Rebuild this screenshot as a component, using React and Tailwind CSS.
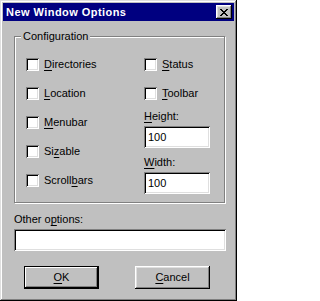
import React from 'react';

const raised = 'shadow-[inset_-1px_-1px_0_#000,inset_1px_1px_0_#fff,inset_-2px_-2px_0_#808080,inset_2px_2px_0_#dfdfdf]';
const sunken = 'shadow-[inset_1px_1px_0_#808080,inset_-1px_-1px_0_#fff,inset_2px_2px_0_#000,inset_-2px_-2px_0_#dfdfdf]';

const Key = ({ children }) => (
    <span className="underline decoration-1 underline-offset-[2px]">{children}</span>
);

const Check = ({ children }) => (
    <label className="flex items-center h-[13px]">
        <span className={`w-[13px] h-[13px] bg-white shrink-0 ${sunken}`} />
        <span className="ml-[5px] leading-[13px]">{children}</span>
    </label>
);

const Field = ({ value, className }) => (
    <div className={`h-[22px] bg-white flex items-center pl-[4px] leading-[13px] ${sunken} ${className}`}>
        {value}
    </div>
);

const App = () => {
    return (
        <div className="w-[237px] h-[301px] bg-[#c0c0c0] p-[3px] text-[11px] text-black font-['Liberation_Sans',Arial,sans-serif] shadow-[inset_-1px_-1px_0_#000,inset_1px_1px_0_#dfdfdf,inset_-2px_-2px_0_#808080,inset_2px_2px_0_#fff]">
            {/* title bar */}
            <div className="h-[18px] bg-[#000080] flex items-center justify-between pl-[3px] pr-[2px]">
                <span className="text-white font-bold leading-[13px] tracking-[0.45px]">New Window Options</span>
                <div className={`w-[16px] h-[14px] bg-[#c0c0c0] flex items-center justify-center pt-[1px] ${raised}`}>
                    <svg width="8" height="7" viewBox="0 0 8 7" shapeRendering="crispEdges">
                        <path
                            fill="#000"
                            d="M0 0h2v1H0z M6 0h2v1H6z M1 1h2v1H1z M5 1h2v1H5z M2 2h4v1H2z M3 3h2v1H3z M2 4h4v1H2z M1 5h2v1H1z M5 5h2v1H5z M0 6h2v1H0z M6 6h2v1H6z"
                        />
                    </svg>
                </div>
            </div>

            {/* configuration group */}
            <div className="relative mt-[15px] ml-[11px] w-[211px] h-[167px] border border-[#808080] shadow-[1px_1px_0_#fff,inset_1px_1px_0_#fff] pt-[21px] pl-[11px] flex">
                <span className="absolute left-[6px] top-[-7px] px-[2px] bg-[#c0c0c0] leading-[13px]">Configuration</span>

                <div className="w-[118px] flex flex-col gap-[16px]">
                    <Check><Key>D</Key>irectories</Check>
                    <Check><Key>L</Key>ocation</Check>
                    <Check><Key>M</Key>enubar</Check>
                    <Check>Si<Key>z</Key>able</Check>
                    <Check>Scroll<Key>b</Key>ars</Check>
                </div>

                <div className="flex flex-col">
                    <Check><Key>S</Key>tatus</Check>
                    <div className="mt-[16px]">
                        <Check><Key>T</Key>oolbar</Check>
                    </div>
                    <div className="mt-[10px] leading-[13px]"><Key>H</Key>eight:</div>
                    <Field value="100" className="mt-[3px] w-[66px]" />
                    <div className="mt-[8px] leading-[13px]"><Key>W</Key>idth:</div>
                    <Field value="100" className="mt-[3px] w-[66px]" />
                </div>
            </div>

            {/* other options */}
            <div className="mt-[10px] ml-[11px] leading-[13px]">Other o<Key>p</Key>tions:</div>
            <Field value="" className="mt-[3px] ml-[11px] w-[212px]" />

            {/* buttons */}
            <div className="flex mt-[15px] ml-[21px] gap-[36px]">
                <button className="w-[75px] h-[23px] border border-black bg-[#c0c0c0] shadow-[inset_-1px_-1px_0_#000,inset_1px_1px_0_#fff,inset_-2px_-2px_0_#808080] leading-[13px]">
                    <Key>O</Key>K
                </button>
                <button className={`w-[75px] h-[23px] bg-[#c0c0c0] leading-[13px] ${raised}`}>
                    <Key>C</Key>ancel
                </button>
            </div>
        </div>
    );
};

export default App;
